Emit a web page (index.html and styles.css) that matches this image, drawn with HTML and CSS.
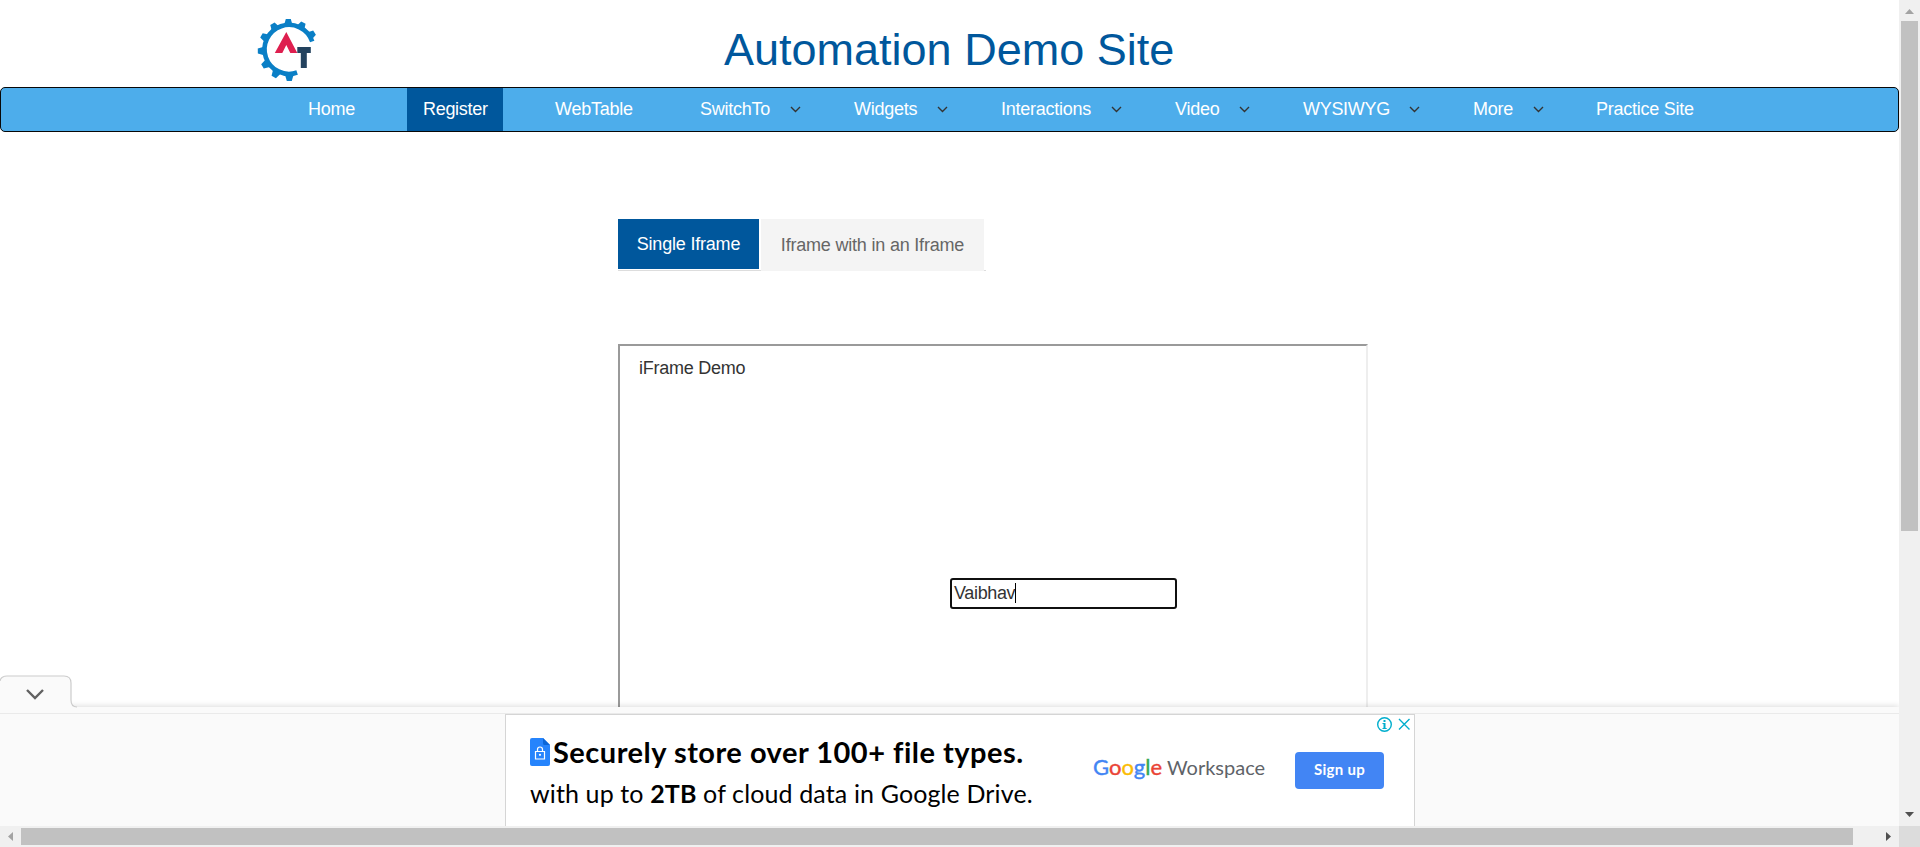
FILE: index.html
```html
<!DOCTYPE html>
<html lang="en">
<head>
<meta charset="utf-8">
<title>Automation Demo Site</title>
<link rel="stylesheet" href="styles.css">
</head>
<body>
<div class="window">
  <div class="view">
    <header class="header">
      <svg class="logo" width="60" height="64" viewBox="0 0 60 64">
        <g transform="translate(32.800 32)">
          <path d="M23.400-8.600A24.500 24.500 0 1 0 8.300 22.500" fill="none" stroke="#0a7fc6" stroke-width="4.600"/>
          <g fill="#0a7fc6">
            <path id="tooth" d="M-3-31h5l2 7h-9z"/>
            <use href="#tooth" transform="rotate(29)"/>
            <use href="#tooth" transform="rotate(57)"/>
            <use href="#tooth" transform="rotate(-31)"/>
            <use href="#tooth" transform="rotate(-61)"/>
            <use href="#tooth" transform="rotate(-91)"/>
            <use href="#tooth" transform="rotate(-121)"/>
            <use href="#tooth" transform="rotate(-150)"/>
            <use href="#tooth" transform="rotate(180)"/>
          </g>
          <path d="M-2.500-18L8.500 3H1.500l-4-8-4 8h-7.500z" fill="#de1f4f"/>
          <path d="M8.500-3H22v6h-4v15h-6V3H8.500z" fill="#23425e"/>
        </g>
      </svg>
      <h1 class="title">Automation Demo Site</h1>
    </header>
    <nav class="nav">
      <a class="item home"><span>Home</span></a>
      <a class="item register"><span>Register</span></a>
      <a class="item webtable"><span>WebTable</span></a>
      <a class="item switchto"><span>SwitchTo</span><svg class="chev" viewBox="0 0 11 7"><path d="M1 1l4.500 4.500L10 1"/></svg></a>
      <a class="item widgets"><span>Widgets</span><svg class="chev" viewBox="0 0 11 7"><path d="M1 1l4.500 4.500L10 1"/></svg></a>
      <a class="item interactions"><span>Interactions</span><svg class="chev" viewBox="0 0 11 7"><path d="M1 1l4.500 4.500L10 1"/></svg></a>
      <a class="item video"><span>Video</span><svg class="chev" viewBox="0 0 11 7"><path d="M1 1l4.500 4.500L10 1"/></svg></a>
      <a class="item wysiwyg"><span>WYSIWYG</span><svg class="chev" viewBox="0 0 11 7"><path d="M1 1l4.500 4.500L10 1"/></svg></a>
      <a class="item more"><span>More</span><svg class="chev" viewBox="0 0 11 7"><path d="M1 1l4.500 4.500L10 1"/></svg></a>
      <a class="item practice"><span>Practice Site</span></a>
    </nav>
    <main class="main">
      <div class="tabs">
        <a class="tab active">Single Iframe</a>
        <a class="tab">Iframe with in an Iframe</a>
      </div>
      <section class="frame">
        <p class="frame-title">iFrame Demo</p>
        <div class="field"><span>Vaibhav</span><i class="caret"></i></div>
      </section>
    </main>
    <div class="ad-bar">
      <svg class="ad-tab" width="84" height="38" viewBox="0 0 84 38">
        <path d="M0 6Q1 1 7 1H64Q71 1 71 8V25Q71 32 77 32V38H0z" fill="#fafafa"/>
        <path d="M0 6Q1 1 7 1H64Q71 1 71 8V25Q71 32 77 32" fill="none" stroke="#ccc" stroke-width="1.200"/>
        <path d="M27 15l8 8 8-8" fill="none" stroke="#616161" stroke-width="2.400"/>
      </svg>
      <div class="ad-line"></div>
      <div class="ad">
        <div class="ad-copy">
          <div class="ad-head">
            <svg class="doc" width="20" height="28" viewBox="0 0 20 28"><path d="M2 0H13L20 7V26Q20 28 18 28H2Q0 28 0 26V2Q0 0 2 0z" fill="#2684fc"/><path d="M13 0L20 7H14Q13 7 13 5z" fill="#0b66d8"/><path d="M5.500 13.500h9v7.500h-9zM7.500 13v-1.500a2.500 2.500 0 0 1 5 0V13" fill="none" stroke="#fff" stroke-width="1.200"/><circle cx="10" cy="16.800" r="1.100" fill="#fff"/></svg>
            <span class="ad-title">Securely store over 100+ file types.</span>
          </div>
          <div class="ad-sub">with up to <b>2TB</b> of cloud data in Google Drive.</div>
        </div>
        <div class="brand"><span class="google"><span class="b">G</span><span class="r">o</span><span class="y">o</span><span class="b">g</span><span class="g">l</span><span class="r">e</span></span> <span class="work">Workspace</span></div>
        <div class="signup">Sign up</div>
        <svg class="choices" width="36" height="18" viewBox="0 0 36 18"><g fill="none" stroke="#00aecd" stroke-width="1.400"><circle cx="8.500" cy="8.500" r="6.800"/><path d="M23 3l10.500 10.500M33.500 3L23 13.500"/></g><path d="M7.500 4h2v2h-2zM6.500 7h3v5h1.200v1H6.500v-1h1V8h-1z" fill="#00aecd"/></svg>
      </div>
    </div>
  </div>
  <div class="vbar">
    <svg width="21" height="21" viewBox="0 0 21 21"><path d="M6 14l4.500-5 4.500 5z" fill="#a3a3a3"/></svg>
    <div class="vthumb"></div>
    <svg width="21" height="21" viewBox="0 0 21 21"><path d="M6 7h9l-4.500 5z" fill="#505050"/></svg>
  </div>
  <div class="hbar">
    <svg width="21" height="21" viewBox="0 0 21 21"><path d="M13 6v9l-5-4.500z" fill="#a3a3a3"/></svg>
    <div class="hthumb"></div>
    <svg width="21" height="21" viewBox="0 0 21 21"><path d="M8 6v9l5-4.500z" fill="#505050"/></svg>
  </div>
  <div class="corner"></div>
</div>
</body>
</html>
```
FILE: styles.css
```css
* { box-sizing: border-box; }
body { margin: 0; font-family: "Liberation Sans", Arial, sans-serif; font-size: 18px; color: #333; overflow: hidden; background: #fff; }
.window { display: grid; grid-template-columns: 1899px 21px; grid-template-rows: 826px 21px; }
.view { position: relative; overflow: hidden; }
.header { height: 87px; display: flex; align-items: flex-start; }
.logo { margin: 18px 0 0 256px; flex: none; }
.title { margin: 24px 0 0 408px; font-size: 45px; line-height: 52px; font-weight: 400; color: #00579c; white-space: nowrap; }
.nav { height: 45px; border: 1px solid #080808; border-radius: 5px; background: #4dadeb; display: flex; color: #fff; padding-left: 307px; line-height: 42px; }
.item { display: flex; flex: none; white-space: nowrap; letter-spacing: -0.25px; justify-content: space-between; }
.home { width: 99px; }
.register { width: 96px; padding-left: 16px; background: #00579c; letter-spacing: -0.3px; }
.webtable { padding-left: 52px; width: 197px; }
.switchto { width: 101px; margin-right: 53px; }
.widgets { width: 94px; margin-right: 53px; }
.interactions { width: 121px; margin-right: 53px; }
.video { width: 75px; margin-right: 53px; }
.wysiwyg { width: 117px; margin-right: 53px; letter-spacing: -0.3px; }
.more { width: 71px; margin-right: 52px; }
.chev { width: 11px; height: 7px; margin-top: 18px; fill: none; stroke: #333; stroke-width: 1.4; }
.main { padding: 87px 0 0 618px; }
.tabs { display: flex; width: 368px; height: 52px; border-bottom: 1px solid #ddd; letter-spacing: -0.2px; }
.tab { width: 223px; height: 52px; background: #f4f4f4; color: #666; text-align: center; line-height: 52px; white-space: nowrap; }
.tab.active { width: 141px; height: 50px; margin-right: 2px; background: #00579c; color: #fff; line-height: 50px; }
.frame { margin-top: 73px; width: 750px; height: 400px; border: 2px solid; border-color: #9a9a9a #eee #eee #9a9a9a; }
.frame-title { margin: 10px 0 0 19px; line-height: 24px; letter-spacing: -0.25px; }
.field { margin: 198px 0 0 330px; width: 227px; height: 31px; border: 2px solid #101010; border-radius: 3px; display: flex; padding: 2px 0 0 2px; line-height: 22px; letter-spacing: -0.35px; }
.caret { width: 1px; height: 20px; margin-top: 1px; background: #000; }
.ad-bar { position: absolute; left: 0; top: 707px; width: 1899px; height: 119px; background: #fafafa; box-shadow: 0 -1px 6px rgba(0,0,0,.14); }
.ad-tab { position: absolute; left: 0; top: -32px; }
.ad-line { height: 7px; border-bottom: 1px solid #eaeaea; }
.ad { position: relative; margin-left: 505px; width: 910px; height: 112px; background: #fff; border: 1px solid #d5d5d5; border-bottom: 0; display: flex; color: #000; }
.ad-copy { padding: 22px 0 0 24px; width: 587px; white-space: nowrap; font-family: Lato, sans-serif; }
.ad-head { display: flex; height: 32px; }
.doc { margin-right: 3px; margin-top: 1px; }
.ad-title { font-size: 29px; font-weight: 700; line-height: 30px; letter-spacing: 0.5px; }
.ad-sub { margin-top: 7px; font-size: 25px; line-height: 34px; letter-spacing: 0.13px; }
.brand { width: 202px; padding-top: 38px; font: 20px/28px Lato, sans-serif; color: #5f6368; white-space: nowrap; }
.google { font-size: 22px; -webkit-text-stroke: 0.4px; }
.b { color: #4285f4; } .r { color: #ea4335; } .y { color: #fbbc04; } .g { color: #34a853; }
.signup { margin-top: 37px; width: 89px; height: 37px; border-radius: 4px; background: #4285f4; color: #fff; font: 700 15px/35px Lato, sans-serif; letter-spacing: 0.3px; text-align: center; }
.choices { position: absolute; right: 2px; top: 1px; }
.vbar { background: #f0f0f0; display: flex; flex-direction: column; }
.vthumb { width: 17px; height: 510px; margin: 0 2px auto; background: #c1c1c1; }
.hbar { background: #f0f0f0; display: flex; }
.hthumb { height: 17px; width: 1832px; margin: 2px auto 0 0; background: #c1c1c1; }
.corner { background: #dcdcdc; }
```
